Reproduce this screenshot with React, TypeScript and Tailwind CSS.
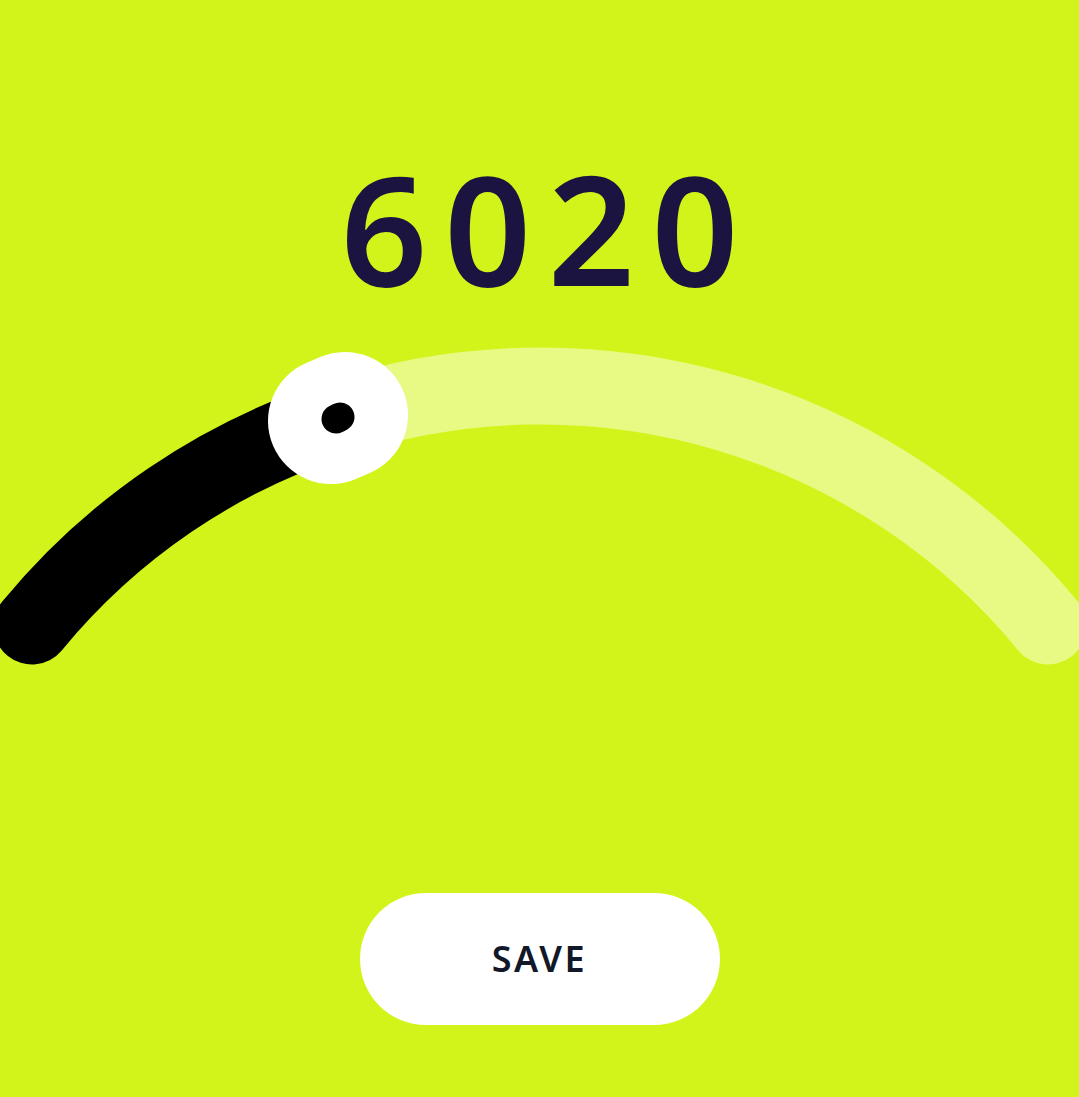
const R = 656.5;

const Gauge = () => {
  // arc ends and knob position (svg coords, svg top sits at page y=330)
  const start = { x: 32, y: 296 };
  const end = { x: 1048, y: 296 };
  const knob = { x: 338, y: 88 };

  return (
    <svg width="1079" height="380" viewBox="0 0 1079 380" className="block">
      <path
        d={`M${knob.x} ${knob.y} A${R} ${R} 0 0 1 ${end.x} ${end.y}`}
        fill="none"
        stroke="#e8fa84"
        strokeWidth="77"
        strokeLinecap="round"
      />
      <path
        d={`M${start.x} ${start.y} A${R} ${R} 0 0 1 ${knob.x} ${knob.y}`}
        fill="none"
        stroke="#000000"
        strokeWidth="77"
        strokeLinecap="round"
      />
      {/* knob */}
      <line
        x1={knob.x - 7}
        y1={knob.y + 3}
        x2={knob.x + 7}
        y2={knob.y - 3}
        stroke="#ffffff"
        strokeWidth="126"
        strokeLinecap="round"
      />
      <line
        x1={knob.x - 2}
        y1={knob.y + 1}
        x2={knob.x + 2}
        y2={knob.y - 1}
        stroke="#000000"
        strokeWidth="29"
        strokeLinecap="round"
      />
    </svg>
  );
};

export default function App() {
  return (
    <div
      className="w-[1079px] h-[1097px] bg-[#d3f41a] flex flex-col items-center overflow-hidden"
      style={{ fontFamily: '"Noto Sans", "Open Sans", sans-serif' }}
    >
      {/* == Value == */}
      <h1 className="mt-[152px] h-[178px] pl-[0.11em] text-[152px] leading-none font-semibold text-[#1b1340] tracking-[0.11em]">
        6020
      </h1>

      {/* == Gauge == */}
      <Gauge />

      {/* == Save == */}
      <button className="mt-[183px] w-[360px] h-[132px] rounded-full bg-white text-[#111827] text-[36px] font-semibold tracking-[0.07em]">
        SAVE
      </button>
    </div>
  );
}
